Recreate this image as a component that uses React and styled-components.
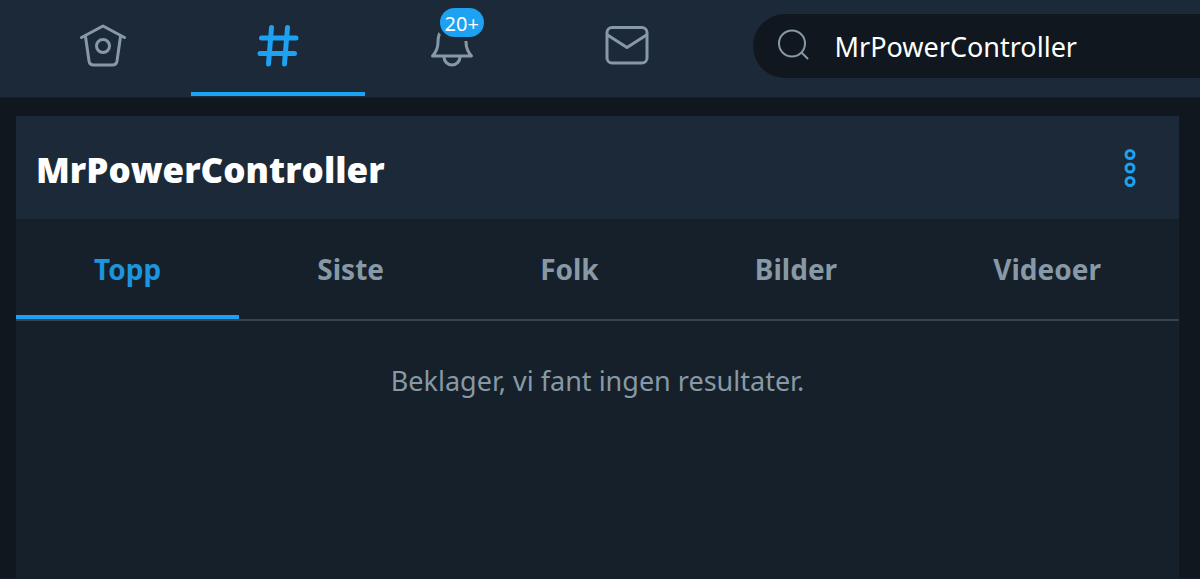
import { useState } from "react"
import styled, { createGlobalStyle } from "styled-components"

const GlobalStyle = createGlobalStyle`
  *,
  *::before,
  *::after {
    box-sizing: border-box;
  }

  body {
    margin: 0;
    background: #10171e;
    color: #8899a6;
    font-family: "Segoe UI", "Noto Sans", "Open Sans", sans-serif;
    font-size: 27px;
    line-height: 36px;
  }

  #root {
    display: flex;
    flex-direction: column;
    min-height: 100vh;
    border-bottom: 1px solid #141c2e;
  }
`

const TopBar = styled.header`
  display: flex;
  align-items: center;
  height: 97px;
  padding-left: 16px;
  background: #1c2938;
  box-shadow: 0 1px 0 #141e28;
`

const Nav = styled.nav`
  display: flex;
  flex: 0 0 59%;
  align-self: stretch;
`

const NavLink = styled.a`
  display: flex;
  flex: 1;
  align-items: center;
  justify-content: center;
  padding-bottom: 2px;
  margin-bottom: 1px;
  border-bottom: 4px solid ${(p) => (p.$active ? "#1da1f2" : "transparent")};
  color: ${(p) => (p.$active ? "#1da1f2" : "#8899a6")};
  text-decoration: none;
`

const IconBox = styled.span`
  position: relative;
  display: flex;
`

const Badge = styled.span`
  position: absolute;
  top: -13px;
  left: 11px;
  height: 29px;
  padding: 0 5px;
  border-radius: 15px;
  background: #1da1f2;
  box-shadow: 0 0 0 4px #1c2938;
  color: #fff;
  font-size: 20px;
  line-height: 31px;
`

const Search = styled.form`
  display: flex;
  flex: 1;
  align-items: center;
  gap: 24px;
  height: 64px;
  margin: 0 0 6px 38px;
  padding-left: 24px;
  border-radius: 32px 0 0 32px;
  background: #10171e;
`

const SearchInput = styled.input`
  flex: 1;
  min-width: 0;
  padding: 2px 0 0;
  border: 0;
  outline: 0;
  background: transparent;
  color: #fff;
  font: inherit;
`

const Card = styled.main`
  flex: 1;
  margin: 19px 21px 0 16px;
  background: #16202a;
`

const CardHeader = styled.div`
  display: flex;
  align-items: center;
  justify-content: space-between;
  height: 103px;
  padding: 0 40px 0 20px;
  background: #1c2938;
`

const Title = styled.h1`
  margin: 0;
  padding-top: 4px;
  color: #fff;
  font-family: "Segoe UI", "Open Sans", sans-serif;
  font-size: 35px;
  font-weight: 900;
  line-height: 48px;
`

const MenuButton = styled.button`
  display: flex;
  padding: 0;
  border: 0;
  background: transparent;
  color: #1da1f2;
`

const Tabs = styled.div`
  display: flex;
  height: 102px;
  border-bottom: 2px solid #38444d;
`

const Tab = styled.button`
  flex: 1 1 auto;
  padding: 4px 0 0;
  border: 0;
  border-bottom: 4px solid ${(p) => (p.$active ? "#1da1f2" : "transparent")};
  background: transparent;
  color: ${(p) => (p.$active ? "#1b95e0" : "#8899a6")};
  font: inherit;
  font-size: 28px;
  font-weight: 700;
`

const Empty = styled.p`
  margin: 0;
  padding: 42px 20px;
  text-align: center;
`

const HomeIcon = () => (
  <svg width="48" height="48" viewBox="0 0 48 48" fill="none" stroke="currentColor" strokeWidth="3" strokeLinecap="round" strokeLinejoin="round">
    <path d="M2.500 16.500 24 5l21.500 11.500" />
    <path d="M6.500 15.500 10 40q.7 4 4.500 4h19q3.800 0 4.500-4l3.500-24.500" />
    <circle cx="24" cy="25" r="6.500" />
  </svg>
)

const HashIcon = () => (
  <svg width="48" height="48" viewBox="0 0 48 48" fill="none" stroke="currentColor" strokeWidth="5" strokeLinecap="round">
    <path d="M17.500 6.500 14.500 43M33.500 6.500 30.500 43M7.500 17H42M6 32.500H40.500" />
  </svg>
)

const BellIcon = () => (
  <svg width="48" height="48" viewBox="0 0 48 48" fill="none" stroke="currentColor" strokeWidth="3" strokeLinecap="round" strokeLinejoin="round">
    <path d="M3.500 35q5.500-6 5.500-14 0-15 14-15t14 15q0 8 5.500 14z" />
    <path d="M15 36a8 8 0 0 0 16 0" />
  </svg>
)

const MailIcon = () => (
  <svg width="48" height="48" viewBox="0 0 48 48" fill="none" stroke="currentColor" strokeWidth="3" strokeLinejoin="round">
    <rect x="4" y="6.500" width="40" height="35.500" rx="5" />
    <path d="M4.500 14 24 26.500 43.500 14" />
  </svg>
)

const SearchIcon = () => (
  <svg width="34" height="34" viewBox="0 0 34 34" fill="none" stroke="#8899a6" strokeWidth="2" strokeLinecap="round">
    <circle cx="15" cy="14.500" r="13" />
    <path d="m25 24 5.500 5.500" />
  </svg>
)

const MoreIcon = () => (
  <svg width="18" height="38" viewBox="0 0 18 38" fill="none" stroke="currentColor" strokeWidth="3">
    <circle cx="9" cy="5.500" r="4" />
    <circle cx="9" cy="19" r="4" />
    <circle cx="9" cy="32.500" r="4" />
  </svg>
)

const links = [
  { label: "Hjem", href: "#hjem", icon: <HomeIcon /> },
  { label: "Utforsk", href: "#utforsk", icon: <HashIcon />, active: true },
  { label: "Varsler", href: "#varsler", icon: <BellIcon />, badge: "20+" },
  { label: "Meldinger", href: "#meldinger", icon: <MailIcon /> },
]

const tabs = ["Topp", "Siste", "Folk", "Bilder", "Videoer"]

const App = () => {
  const [query, setQuery] = useState("MrPowerController")
  const [current, setCurrent] = useState("Topp")

  return (
    <>
      <GlobalStyle />
      <TopBar>
        <Nav>
          {links.map((link) => (
            <NavLink key={link.href} href={link.href} aria-label={link.label} $active={link.active}>
              <IconBox>
                {link.icon}
                {link.badge && <Badge>{link.badge}</Badge>}
              </IconBox>
            </NavLink>
          ))}
        </Nav>
        <Search role="search" onSubmit={(e) => e.preventDefault()}>
          <SearchIcon />
          <SearchInput
            type="text"
            aria-label="Søk"
            value={query}
            onChange={(e) => setQuery(e.target.value)}
          />
        </Search>
      </TopBar>
      <Card>
        <CardHeader>
          <Title>MrPowerController</Title>
          <MenuButton type="button" aria-label="Mer">
            <MoreIcon />
          </MenuButton>
        </CardHeader>
        <Tabs role="tablist">
          {tabs.map((tab) => (
            <Tab
              key={tab}
              type="button"
              role="tab"
              aria-selected={tab === current}
              $active={tab === current}
              onClick={() => setCurrent(tab)}
            >
              {tab}
            </Tab>
          ))}
        </Tabs>
        <Empty>Beklager, vi fant ingen resultater.</Empty>
      </Card>
    </>
  )
}

export default App
